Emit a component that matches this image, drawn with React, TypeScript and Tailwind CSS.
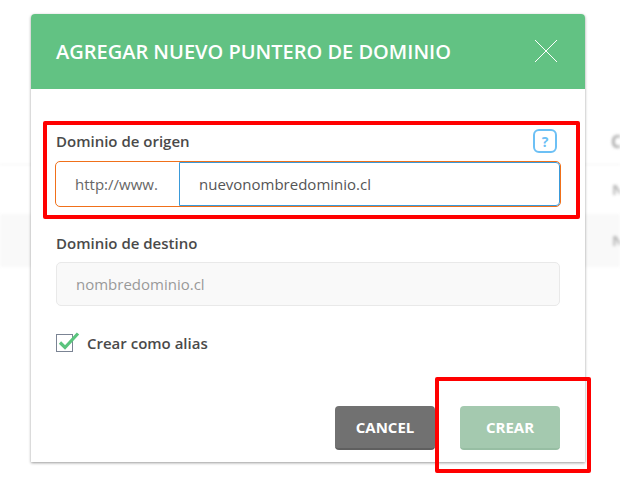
export default function App() {
  return (
    <div className="relative w-[620px] h-[490px] overflow-hidden bg-white font-['Open_Sans',sans-serif]">
      {/* table behind the modal, out of focus */}
      <div className="pt-[129px] text-[17px] font-bold text-[#aaa] blur-[1.5px]">
        <div className="h-[36px] flex justify-end border-b border-[#f2f2f2]">
          <span className="w-[9px] overflow-hidden">C</span>
        </div>
        <div className="h-[49px] flex justify-end items-center">
          <span className="w-[8px] overflow-hidden text-[15px] text-[#b5b5b5]">N</span>
        </div>
        <div className="h-[53px] flex justify-end items-center bg-[#f9f9f9]">
          <span className="w-[8px] overflow-hidden text-[15px] text-[#b5b5b5]">N</span>
        </div>
      </div>

      {/* modal */}
      <div className="absolute left-[31px] top-[14px] w-[554px] h-[448px] flex flex-col bg-white rounded-t-[4px] shadow-[0_1px_3px_rgba(0,0,0,0.4)]">
        <div className="h-[75px] shrink-0 flex items-center justify-between pl-[25px] pr-[27px] bg-[#62c283] rounded-t-[4px]">
          <h2 className="text-[20px] font-semibold text-white">AGREGAR NUEVO PUNTERO DE DOMINIO</h2>
          <svg width="24" height="24" viewBox="0 0 24 24" className="stroke-white -mt-[2px]">
            <path d="M1 1L23 23M23 1L1 23" strokeWidth="1" fill="none" />
          </svg>
        </div>

        <div className="flex-1 flex flex-col px-[25px] pt-[40px] pb-[12px] text-[15px] font-semibold text-[#4a4a4a]">
          <div className="h-[32px] flex justify-between items-start">
            <label className="leading-[24px]">Dominio de origen</label>
            <div className="w-[24px] h-[24px] mr-[3px] flex items-center justify-center border-2 border-[#6cc0f5] rounded-[6px] text-[14px] font-bold text-[#6cc0f5]">?</div>
          </div>
          <div className="h-[46px] -mx-[1px] flex border border-[#f0701a] rounded-[5px] font-normal">
            <div className="w-[123px] flex items-center pl-[19px] text-[#666]">http://www.</div>
            <div className="flex-1 flex items-center pl-[19px] text-[#555] border border-[#3a9ad9] rounded-r-[4px]">nuevonombredominio.cl</div>
          </div>

          <label className="mt-[25px] leading-[22px]">Dominio de destino</label>
          <div className="mt-[8px] h-[44px] flex items-center pl-[19px] font-normal text-[#999] bg-[#f9f9f9] border border-[#e9e9e9] rounded-[5px]">nombredominio.cl</div>

          <div className="mt-[26px] flex items-center gap-[14px]">
            <div className="relative w-[17px] h-[18px] border border-[#7b8494]">
              <svg width="22" height="22" viewBox="0 0 22 22" className="absolute left-[1px] -top-[3px] stroke-[#5ac47d]">
                <path d="M2 10.5L7 15.5L20 1.5" strokeWidth="3.2" fill="none" />
              </svg>
            </div>
            <span>Crear como alias</span>
          </div>

          <div className="mt-auto flex justify-end gap-[25px]">
            <button className="w-[100px] h-[44px] text-[15px] font-bold text-white bg-[#717171] border-b-2 border-[#5f5f5f] rounded-[4px]">CANCEL</button>
            <button className="w-[100px] h-[44px] text-[15px] font-bold text-white bg-[#a4c9af] border-b-2 border-[#97bea3] rounded-[4px]">CREAR</button>
          </div>
        </div>
      </div>

      {/* red annotation boxes */}
      <div className="absolute left-[43px] top-[121px] w-[537px] h-[98px] border-[4px] border-[#ff0000] rounded-[2px]" />
      <div className="absolute left-[435px] top-[377px] w-[156px] h-[96px] border-[4px] border-[#ff0000] rounded-[2px]" />
    </div>
  );
}
